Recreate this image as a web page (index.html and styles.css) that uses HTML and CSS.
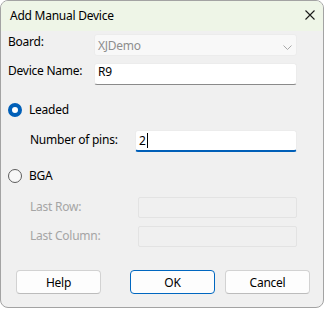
FILE: index.html
```html
<!DOCTYPE html>
<html lang="en">

  <head>
    <meta charset="UTF-8">
    <title>Add Manual Device</title>
    <link rel="stylesheet" href="styles.css">
  </head>

  <body>
    <div class="window">
      <div class="titlebar">
        <span class="title">Add Manual Device</span>
        <svg class="close" width="10" height="10" viewBox="0 0 10 10">
          <path d="M0.5 0.5 L9.5 9.5 M9.5 0.5 L0.5 9.5" stroke="#1a1a1a" stroke-width="1.1" fill="none" />
        </svg>
      </div>

      <div class="content">
        <div class="row board-row">
          <label class="lbl">Board:</label>
          <div class="combo">
            <span>XJDemo</span>
            <svg class="chevron" width="9" height="5" viewBox="0 0 9 5">
              <path d="M0.5 0.5 L4.5 4.5 L8.5 0.5" stroke="#a8a8a8" stroke-width="1" fill="none" />
            </svg>
          </div>
        </div>

        <div class="row name-row">
          <label class="lbl">Device Name:</label>
          <div class="field">R9</div>
        </div>

        <div class="radio-row leaded-row">
          <span class="radio checked"></span>
          <span>Leaded</span>
        </div>

        <div class="row sub-row pins-row">
          <label class="sub-lbl">Number of pins:</label>
          <div class="field focused">2<span class="caret"></span></div>
        </div>

        <div class="radio-row bga-row">
          <span class="radio"></span>
          <span>BGA</span>
        </div>

        <div class="row sub-row disabled lastrow-row">
          <label class="sub-lbl">Last Row:</label>
          <div class="field off"></div>
        </div>

        <div class="row sub-row disabled lastcol-row">
          <label class="sub-lbl">Last Column:</label>
          <div class="field off"></div>
        </div>

        <div class="buttons">
          <button class="btn help">Help</button>
          <button class="btn ok">OK</button>
          <button class="btn cancel">Cancel</button>
        </div>
      </div>
    </div>
  </body>

</html>
```

FILE: styles.css
```css
* {
  box-sizing: border-box;
  font-family: 'Noto Sans', 'Open Sans', sans-serif;
  letter-spacing: -0.25px;
}

body {
  margin: 0;
  background: #ffffff;
  font-size: 12px;
  color: #000;
}

.window {
  width: 324px;
  height: 308px;
  border: 1px solid #a3a3a3;
  border-radius: 8px;
  background: #f0f0f0;
  overflow: hidden;
  display: flex;
  flex-direction: column;
}

.titlebar {
  height: 30px;
  background: #eef5e7;
  display: flex;
  align-items: center;
  justify-content: space-between;
  padding: 0 8px 0 9px;
}

.title {
  font-size: 12px;
  line-height: 16px;
}

.close {
  display: block;
  margin-top: -2px;
}

.content {
  padding: 3px 0 0 7px;
  display: flex;
  flex-direction: column;
}

.row {
  display: flex;
  align-items: flex-start;
}

.lbl {
  width: 86px;
  line-height: 16px;
}

.combo {
  width: 203px;
  height: 22px;
  background: #f8f8f8;
  border: 1px solid #ececec;
  border-radius: 3px;
  padding: 3px 0 0 3px;
  line-height: 16px;
  color: #8e8e8e;
  display: flex;
  justify-content: space-between;
}

.chevron {
  margin: 7px 4px 0 0;
}

.name-row {
  margin-top: 7px;
}

.field {
  width: 203px;
  height: 22px;
  background: #fff;
  border: 1px solid #ececec;
  border-bottom: 1px solid #8a8a8a;
  border-radius: 3px;
  padding: 0 3px;
  line-height: 16px;
}

.radio-row {
  display: flex;
  align-items: center;
  height: 16px;
  line-height: 16px;
}

.leaded-row {
  margin-top: 17px;
}

.bga-row {
  margin-top: 16px;
}

.radio {
  width: 14px;
  height: 14px;
  border-radius: 50%;
  border: 1px solid #5c5c5c;
  background: #f7f7f7;
  margin-right: 7px;
}

.radio.checked {
  border: 4px solid #005fb8;
  background: #fff;
}

.sub-row {
  padding-left: 22px;
}

.sub-lbl {
  width: 105px;
  line-height: 16px;
  margin-top: 2px;
}

.pins-row {
  margin-top: 12px;
}

.pins-row .field {
  width: 162px;
  border-bottom: 2px solid #005fb8;
  padding-top: 2px;
  display: flex;
}

.caret {
  width: 1px;
  height: 15px;
  background: #000;
  margin-left: 1px;
}

.disabled {
  color: #a5a5a5;
}

.disabled .sub-lbl {
  width: 108px;
}

.field.off {
  width: 159px;
  height: 21px;
  background: #f0f0f0;
  border: 1px solid #e3e3e3;
  border-radius: 2px;
}

.lastrow-row {
  margin-top: 13px;
}

.lastcol-row {
  margin-top: 8px;
}

.buttons {
  display: flex;
  margin-top: 23px;
  padding-left: 8px;
}

.btn {
  width: 85px;
  height: 24px;
  background: #fdfdfd;
  border: 1px solid #d2d2d2;
  border-bottom-color: #bcbcbc;
  border-radius: 4px;
  font-size: 12px;
  color: #000;
  padding: 0;
}

.ok {
  margin-left: 29px;
  border: 1px solid #0067c0;
}

.cancel {
  margin-left: 10px;
}
```
